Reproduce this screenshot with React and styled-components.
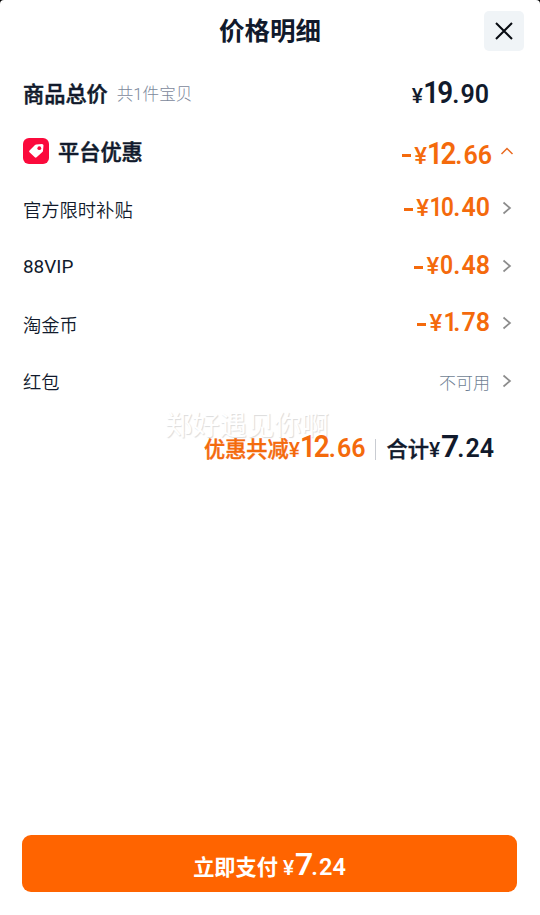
import styled, { createGlobalStyle } from 'styled-components';

const GlobalStyle = createGlobalStyle`
  * {
    box-sizing: border-box;
  }
  body {
    margin: 0;
    background: #000;
    font-family: "Noto Sans CJK SC", sans-serif;
    color: #111a2c;
  }
`

const Sheet = styled.main`
  height: 915px;
  width: 540px;
  display: flex;
  flex-direction: column;
  background: #fff;
  border-radius: 4px 4px 0 0;
  overflow: hidden;
`

const Header = styled.header`
  display: grid;
  grid-template-columns: 1fr auto 1fr;
  align-items: center;
  height: 62px;
  padding: 0 16px;
`

const Title = styled.h1`
  grid-column: 2;
  margin: 0;
  padding-bottom: 5px;
  font-size: 25.5px;
  font-weight: 700;
  line-height: 40px;
`

const CloseButton = styled.button`
  justify-self: end;
  display: flex;
  align-items: center;
  justify-content: center;
  width: 40px;
  height: 40px;
  padding: 0;
  border: none;
  border-radius: 5px;
  background: #f0f4f7;
`

const Row = styled.div`
  display: flex;
  align-items: center;
  height: ${p => p.$height || 57.5}px;
  padding: 0 23px;
`

const Heading = styled.h2`
  margin: 0;
  padding-top: ${p => p.$drop || 0}px;
  font-size: 21.2px;
  font-weight: 500;
  line-height: 30px;
  -webkit-text-stroke: 0.5px currentColor;
`

const Count = styled.span`
  margin-left: 9px;
  padding-top: 2px;
  font-family: Roboto, "Noto Sans CJK SC", sans-serif;
  font-size: 16.6px;
  font-weight: 300;
  color: #7c889b;
`

const Badge = styled.span`
  display: flex;
  width: 26px;
  height: 26px;
  margin: 0 9px 0 0;
  border-radius: 6px;
  background: #fb0a3c;
`

const Label = styled.span`
  padding-top: ${p => p.$latin ? 2 : 1}px;
  font-family: ${p => p.$latin ? 'Roboto, sans-serif' : 'inherit'};
  font-size: ${p => p.$latin ? 18.9 : 18.3}px;
  font-weight: ${p => p.$latin ? 400 : 350};
`

const End = styled.div`
  display: flex;
  align-items: center;
  margin-left: auto;
  padding-right: ${p => p.$inset || 0}px;
`

const Unavailable = styled.span`
  padding-top: 1px;
  font-size: 17px;
  font-weight: 300;
  color: #6f7f94;
`

const Arrow = styled.svg`
  width: 10px;
  height: 14px;
  margin: 0 5px 0 12px;
  fill: none;
  stroke: #8c8c8c;
  stroke-width: 1.7;
`

const ArrowUp = styled.svg`
  width: 14px;
  height: 10px;
  margin: 0 3px 0 8px;
  fill: none;
  stroke: #e96a20;
  stroke-width: 1.5;
`

const Amount = styled.span`
  display: flex;
  align-items: baseline;
  padding-top: ${p => p.$drop || 0}px;
  font-family: Roboto, sans-serif;
  font-weight: 600;
  line-height: 36px;
  color: ${p => p.$color || 'inherit'};
`

const Minus = styled.span`
  width: 9px;
  height: 2.6px;
  align-self: center;
  margin: 3px 3px 0 0;
  background: currentColor;
`

const Yen = styled.span`
  margin-right: 1px;
  font-size: ${p => p.$size}px;
  font-weight: 500;
`

// digits are squeezed a little, the left margin takes up the freed width
const Whole = styled.span`
  font-size: ${p => p.$size}px;
  letter-spacing: ${p => p.$tight || 0}px;
  margin-left: ${p => -p.$digits * p.$size * 0.56 * (1 - p.$squeeze)}px;
  transform: scaleX(${p => p.$squeeze});
  transform-origin: right;
`

const Cents = styled.span`
  font-size: ${p => p.$size}px;
`

const Dot = styled.span`
  margin: 0 1px 0 ${p => p.$gap}px;
`

const Total = styled.div`
  position: relative;
  display: flex;
  align-items: baseline;
  justify-content: flex-end;
  height: 58px;
  padding: 18px 46px 0 0;
`

const Divider = styled.span`
  align-self: flex-start;
  width: 1px;
  height: 21px;
  margin: 11px 10px 0;
  background: #c9ccd2;
`

const TotalLabel = styled.span`
  font-size: 21.2px;
  font-weight: 500;
  line-height: 36px;
  color: ${p => p.$color || 'inherit'};
  -webkit-text-stroke: 0.4px currentColor;
`

// account name watermark, runs just under the totals
const Watermark = styled.span`
  position: absolute;
  top: 403px;
  left: 165px;
  font-size: 27.3px;
  font-weight: 400;
  line-height: 40px;
  color: #fff;
  text-shadow: 1px 1px 1px #dcdcdc;
  pointer-events: none;
`

const PayButton = styled.button`
  display: flex;
  align-items: baseline;
  justify-content: center;
  height: 57px;
  margin: auto 23px 23px 22px;
  padding: 11px 0 0;
  border: none;
  border-radius: 9px;
  background: #ff6400;
  color: #fff;
  font-family: inherit;
`

const PayLabel = styled.span`
  margin-right: 5px;
  font-size: 21.2px;
  font-weight: 700;
  line-height: 36px;
`

const ORANGE = '#f46a0c'

function Price({ value, color, minus, small, tight = -2, squeeze = 0.87, drop, cents = 25 }) {
  const [whole, rest] = value.split('.')
  return (
    <Amount $color={color} $drop={drop}>
      {minus && <Minus />}
      <Yen $size={minus ? 24 : 21}>¥</Yen>
      <Whole $size={small ? 25 : 32} $tight={tight} $squeeze={squeeze} $digits={whole.length}>{whole}</Whole>
      <Cents $size={cents}><Dot $gap={small ? 0.5 : 1}>.</Dot>{rest}</Cents>
    </Amount>
  )
}

function Next() {
  return (
    <Arrow viewBox="0 0 10 14">
      <path d="M1.500 1.500 8 7l-6.500 5.500" />
    </Arrow>
  )
}

const discounts = [
  { label: '官方限时补贴', value: '10.40', tight: -1.5, squeeze: 0.9 },
  { label: '88VIP', value: '0.48', latin: true, tight: -0.5, squeeze: 0.92 },
  { label: '淘金币', value: '1.78', tight: -4, squeeze: 0.95 },
]

export default function App() {
  return (
    <>
      <GlobalStyle />
      <Sheet>
        <Header>
          <Title>价格明细</Title>
          <CloseButton aria-label="关闭">
            <svg width="18" height="18" viewBox="0 0 18 18" fill="none" stroke="#080b12" strokeWidth="2">
              <path d="M1 1l16 16M17 1 1 17" />
            </svg>
          </CloseButton>
        </Header>

        <Row $height={60}>
          <Heading $drop={2}>商品总价</Heading>
          <Count>共1件宝贝</Count>
          <End $inset={28}>
            <Price value="19.90" tight={-2.2} drop={4} />
          </End>
        </Row>

        <Row>
          <Badge>
            <svg width="26" height="26" viewBox="0 0 26 26">
              <path d="M13.200 6.600 19 6q1.500 0 1.500 1.500l-.5 5.300q0 .7-.6 1.200l-5.800 5.300q-.9.900-1.800 0L6.500 14.300q-.9-.9 0-1.800L12 7.100q.5-.5 1.200-.5Z" fill="#fff" />
              <circle cx="16.300" cy="10.200" r="1.900" fill="#fb0a3c" />
            </svg>
          </Badge>
          <Heading>平台优惠</Heading>
          <End>
            <Price value="12.66" color={ORANGE} minus tight={-2.8} drop={7} />
            <ArrowUp viewBox="0 0 14 10">
              <path d="M1.500 8 7 2.500 12.500 8" />
            </ArrowUp>
          </End>
        </Row>

        {discounts.map(d => (
          <Row key={d.label}>
            <Label $latin={d.latin}>{d.label}</Label>
            <End>
              <Price value={d.value} color={ORANGE} minus small tight={d.tight} squeeze={d.squeeze} />
              <Next />
            </End>
          </Row>
        ))}

        <Row>
          <Label>红包</Label>
          <End>
            <Unavailable>不可用</Unavailable>
            <Next />
          </End>
        </Row>

        <Watermark>郑好遇见你啊</Watermark>
        <Total>
          <TotalLabel $color={ORANGE}>优惠共减</TotalLabel>
          <Price value="12.66" color={ORANGE} tight={-2.5} />
          <Divider />
          <TotalLabel>合计</TotalLabel>
          <Price value="7.24" squeeze={1} tight={-3} />
        </Total>

        <PayButton>
          <PayLabel>立即支付</PayLabel>
          <Price value="7.24" squeeze={1} tight={-3} cents={23.5} />
        </PayButton>
      </Sheet>
    </>
  )
}
